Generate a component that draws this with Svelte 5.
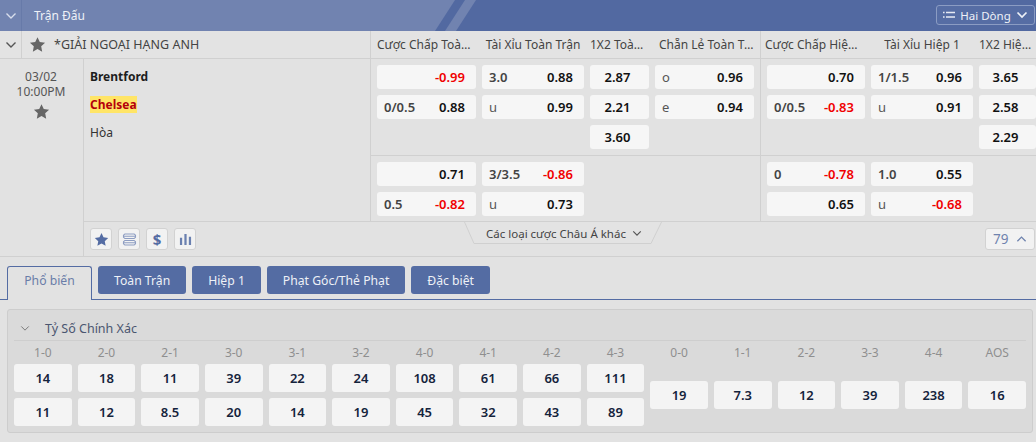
<script>
  const titlesA = ['Cược Chấp Toàn Trận', 'Tài Xỉu Toàn Trận', '1X2 Toàn Trận', 'Chẵn Lẻ Toàn Trận'];
  const titlesB = ['Cược Chấp Hiệp 1', 'Tài Xỉu Hiệp 1', '1X2 Hiệp 1'];
  const a1 = [
    [['', '-0.99'], ['0/0.5', '0.88']],
    [['3.0', '0.88'], ['u', '0.99']],
    [['', '2.87'], ['', '2.21'], ['', '3.60']],
    [['o', '0.96'], ['e', '0.94']]
  ];
  const b1 = [
    [['', '0.70'], ['0/0.5', '-0.83']],
    [['1/1.5', '0.96'], ['u', '0.91']],
    [['', '3.65'], ['', '2.58'], ['', '2.29']]
  ];
  const a2 = [
    [['', '0.71'], ['0.5', '-0.82']],
    [['3/3.5', '-0.86'], ['u', '0.73']],
    [],
    []
  ];
  const b2 = [
    [['0', '-0.78'], ['', '0.65']],
    [['1.0', '0.55'], ['u', '-0.68']],
    []
  ];
  const tabs = ['Toàn Trận', 'Hiệp 1', 'Phạt Góc/Thẻ Phạt', 'Đặc biệt'];
  const scores = [
    ['1-0', '14', '11'], ['2-0', '18', '12'], ['2-1', '11', '8.5'], ['3-0', '39', '20'],
    ['3-1', '22', '14'], ['3-2', '24', '19'], ['4-0', '108', '45'], ['4-1', '61', '32'],
    ['4-2', '66', '43'], ['4-3', '111', '89'], ['0-0', '19'], ['1-1', '7.3'],
    ['2-2', '12'], ['3-3', '39'], ['4-4', '238'], ['AOS', '16']
  ];
  const star = 'M12 1.6l3.2 6.9 7.5.9-5.5 5.2 1.4 7.5L12 18.4l-6.6 3.7 1.4-7.5-5.5-5.2 7.5-.9z';
</script>

{#snippet odds(cols)}
  {#each cols as col}
    <div class="stack">
      {#each col as [line, val]}
        <div class="odd" class:solo={!line}>
          {#if line}<span class="line" class:soft={line === 'u' || line === 'o' || line === 'e'}>{line}</span>{/if}
          <span class="val" class:neg={val.startsWith('-')}>{val}</span>
        </div>
      {/each}
    </div>
  {/each}
{/snippet}

{#snippet chevron(cls, dir = 'down')}
  <svg class={cls} viewBox="0 0 12 8" aria-hidden="true">
    <polyline points={dir === 'down' ? '1.5,1.5 6,6 10.5,1.5' : '1.5,6.5 6,2 10.5,6.5'} />
  </svg>
{/snippet}

<div class="page">
  <header class="topbar">
    <div class="top-chev">{@render chevron('chev light')}</div>
    <div class="top-title">Trận Đấu</div>
    <button class="mode">
      <svg class="lines" viewBox="0 0 12 8" aria-hidden="true">
        <path d="M0 1.500h1.600M3 1.500h9M0 6h1.600M3 6h9" />
      </svg>
      <span>Hai Dòng</span>
      {@render chevron('chev light big')}
    </button>
  </header>

  <div class="league">
    <div class="league-name">
      <div class="league-chev">{@render chevron('chev')}</div>
      <svg class="star hstar" viewBox="0 0 24 24" aria-hidden="true"><path d={star} /></svg>
      <span>*GIẢI NGOẠI HẠNG ANH</span>
    </div>
    <div class="grid-a heads">
      {#each titlesA as t}<div class="head">{t}</div>{/each}
    </div>
    <div class="grid-b heads">
      {#each titlesB as t}<div class="head">{t}</div>{/each}
    </div>
  </div>

  <div class="match">
    <div class="when">
      <div>03/02</div>
      <div>10:00PM</div>
      <svg class="star mstar" viewBox="0 0 24 24" aria-hidden="true"><path d={star} /></svg>
    </div>
    <div class="detail">
      <div class="upper">
        <div class="teams">
          <div class="team"><b>Brentford</b></div>
          <div class="team"><b class="fav">Chelsea</b></div>
          <div class="team">Hòa</div>
        </div>
        <div class="markets">
          <div class="mrow first">
            <div class="grid-a">{@render odds(a1)}</div>
            <div class="grid-b">{@render odds(b1)}</div>
          </div>
          <div class="mrow second">
            <div class="grid-a">{@render odds(a2)}</div>
            <div class="grid-b">{@render odds(b2)}</div>
          </div>
        </div>
      </div>
      <div class="foot">
        <div class="tools">
          <button class="tool" aria-label="Yêu thích">
            <svg viewBox="0 0 24 24" class="t-star"><path d={star} /></svg>
          </button>
          <button class="tool" aria-label="Dòng">
            <svg viewBox="0 0 16 14" class="t-stack">
              <path d="M3 1h10l1.500 1.500v2L13 6H3L1.500 4.500v-2zM3 8h10l1.500 1.500v2L13 13H3l-1.500-1.500v-2zM1.500 3.500h13M1.500 10.500h13" />
            </svg>
          </button>
          <button class="tool dollar">$</button>
          <button class="tool" aria-label="Thống kê">
            <svg viewBox="0 0 14 14" class="t-bars"><path d="M1 5h2.400v8H1zM5.800 1h2.400v12H5.800zM10.600 4h2.400v9h-2.400z" /></svg>
          </button>
        </div>
        <div class="more">
          <svg class="more-bg" viewBox="0 0 198 22" aria-hidden="true">
            <path d="M0.500 0L10 21.500H187L197.500 0" />
          </svg>
          <span>Các loại cược Châu Á khác</span>
          {@render chevron('chev more-chev')}
        </div>
        <button class="count">
          <span>79</span>
          {@render chevron('chev up', 'up')}
        </button>
      </div>
    </div>
  </div>

  <nav class="tabs">
    <div class="tab active">Phổ biến</div>
    {#each tabs as t}<div class="tab">{t}</div>{/each}
  </nav>

  <section class="scorebox">
    <div class="sb-head">
      {@render chevron('chev sb-chev')}
      <span>Tỷ Số Chính Xác</span>
    </div>
    <div class="scores">
      {#each scores as [label, x, y]}
        <div class="score">
          <div class="label">{label}</div>
          <div class="cells" class:mid={!y}>
            <div class="cell">{x}</div>
            {#if y}<div class="cell">{y}</div>{/if}
          </div>
        </div>
      {/each}
    </div>
  </section>
</div>

<style>
  :global(body) {
    margin: 0;
    background: #e2e2e2;
  }
  .page {
    width: 1036px;
    height: 442px;
    overflow: hidden;
    background: #e2e2e2;
    font-family: "Noto Sans", "Open Sans", sans-serif;
    font-size: 12px;
    color: #333;
  }
  button {
    font: inherit;
    padding: 0;
    margin: 0;
    cursor: pointer;
  }
  .chev {
    width: 12px;
    height: 8px;
    fill: none;
    stroke: #555;
    stroke-width: 1.400;
    display: block;
  }
  :global(.chev.light) {
    stroke: #d8deec;
  }
  :global(.chev.big) {
    stroke: #eef1f7;
    stroke-width: 1.700;
  }

  /* top bar */
  .topbar {
    position: relative;
    height: 31px;
    display: flex;
    align-items: center;
    background: #5269a1;
    color: #eef1f7;
    box-sizing: border-box;
  }
  .topbar::before,
  .topbar::after {
    content: "";
    position: absolute;
    inset: 0;
    background: #7183b0;
  }
  .topbar::before {
    clip-path: polygon(0 0, 455px 0, 435px 100%, 0 100%);
  }
  .topbar::after {
    clip-path: polygon(465px 0, 476px 0, 456px 100%, 445px 100%);
  }
  .top-chev {
    position: relative;
    z-index: 1;
    width: 21px;
    height: 31px;
    border-right: 1px solid #677aa9;
    display: flex;
    align-items: center;
    justify-content: center;
    box-sizing: content-box;
  }
  .top-title {
    position: relative;
    z-index: 1;
    margin-left: 12px;
  }
  .mode {
    position: relative;
    z-index: 1;
    margin-left: auto;
    margin-right: 1px;
    width: 99px;
    height: 20px;
    margin-top: -1px;
    display: flex;
    align-items: center;
    justify-content: center;
    gap: 5px;
    background: #566da4;
    border: 1px solid #8b9cc3;
    border-radius: 3px;
    color: #eef1f7;
    font-size: 11.500px;
    box-sizing: border-box;
  }
  .lines {
    width: 12px;
    height: 8px;
    fill: none;
    stroke: #e6eaf3;
    stroke-width: 1.300;
  }

  /* league row */
  .league {
    display: flex;
    height: 28px;
    border-bottom: 1px solid #d0d0d0;
    box-sizing: border-box;
    background: #e3e3e3;
  }
  .league-name {
    width: 370px;
    border-right: 1px solid #d0d0d0;
    display: flex;
    align-items: center;
    color: #444;
    font-size: 12.500px;
    box-sizing: content-box;
  }
  .league-chev {
    width: 21px;
    height: 100%;
    border-right: 1px solid #d0d0d0;
    display: flex;
    align-items: center;
    justify-content: center;
  }
  .star {
    fill: #666;
    display: block;
  }
  .hstar {
    width: 17px;
    height: 17px;
    margin: 0 8px 0 7px;
  }
  .heads {
    align-items: center;
  }
  .head {
    color: #444;
    white-space: nowrap;
    overflow: hidden;
    text-overflow: ellipsis;
    text-align: center;
  }
  .grid-a .head:nth-child(4) {
    padding-left: 4px;
  }
  .grid-b .head:nth-child(1) {
    margin-left: -2px;
    margin-right: 4px;
  }

  /* shared market columns */
  .grid-a {
    width: 390px;
    box-sizing: border-box;
    padding: 0 6px;
    display: grid;
    grid-template-columns: 99px 102px 59px 99px;
    gap: 6px;
    border-right: 1px solid #d0d0d0;
  }
  .grid-b {
    flex: 1;
    box-sizing: border-box;
    padding-left: 6px;
    display: grid;
    grid-template-columns: 98px 102px 57px;
    gap: 6px;
  }

  /* match */
  .match {
    display: flex;
    height: 198px;
    border-bottom: 1px solid #d0d0d0;
    box-sizing: border-box;
  }
  .when {
    width: 82px;
    padding: 10px 1px 0 0;
    border-right: 1px solid #d0d0d0;
    box-sizing: content-box;
    display: flex;
    flex-direction: column;
    align-items: center;
    color: #555;
    line-height: 15px;
  }
  .mstar {
    width: 17px;
    height: 17px;
    margin-top: 4px;
  }
  .detail {
    flex: 1;
    display: flex;
    flex-direction: column;
    min-width: 0;
  }
  .upper {
    display: flex;
    height: 162px;
    border-bottom: 1px solid #d0d0d0;
    box-sizing: content-box;
  }
  .teams {
    flex: none;
    width: 280px;
    border-right: 1px solid #d0d0d0;
    padding: 8px 0 0 6px;
    box-sizing: content-box;
  }
  .team {
    height: 28px;
    line-height: 19px;
    color: #333;
  }
  .team b {
    color: #1d1d1d;
    font-weight: 700;
  }
  .team b.fav {
    color: #b5000b;
    background: #ffe567;
    display: inline-block;
    line-height: 17px;
    margin-top: 1px;
  }
  .markets {
    flex: 1;
    display: flex;
    flex-direction: column;
  }
  .mrow {
    display: flex;
  }
  .mrow.first {
    height: 96px;
    border-bottom: 1px solid #d0d0d0;
    box-sizing: content-box;
  }
  .mrow.first > div,
  .mrow.second > div {
    padding-top: 6px;
  }
  .mrow.second {
    flex: 1;
  }
  .stack {
    display: flex;
    flex-direction: column;
    gap: 6px;
  }
  .odd {
    height: 24px;
    background: #f6f6f6;
    border-radius: 3px;
    display: flex;
    align-items: center;
    justify-content: space-between;
    padding: 0 11px 0 7px;
    box-sizing: border-box;
    font-size: 13px;
    font-weight: 600;
  }
  .odd.solo {
    justify-content: center;
  }
  .grid-a .stack:nth-child(1) .odd.solo,
  .grid-a .stack:nth-child(2) .odd.solo,
  .grid-a .stack:nth-child(4) .odd.solo,
  .grid-b .stack:nth-child(1) .odd.solo,
  .grid-b .stack:nth-child(2) .odd.solo {
    justify-content: flex-end;
  }
  .line {
    color: #444;
    font-weight: 600;
  }
  .line.soft {
    font-weight: 400;
    color: #555;
  }
  .val {
    color: #111;
  }
  .val.neg {
    color: #f00000;
  }

  /* footer */
  .foot {
    position: relative;
    flex: 1;
    display: flex;
    align-items: flex-start;
    justify-content: space-between;
    padding: 6px 0 0 6px;
  }
  .tools {
    display: flex;
    gap: 6px;
  }
  .tool {
    width: 22px;
    height: 22px;
    border: 1px solid #d2d2d2;
    border-radius: 3px;
    background: #f2f2f2;
    display: flex;
    align-items: center;
    justify-content: center;
    box-sizing: border-box;
    color: #546ca3;
  }
  .tool.dollar {
    font-size: 15px;
    font-weight: 700;
    line-height: 1;
  }
  .t-star {
    width: 15px;
    height: 15px;
    fill: #546ca3;
  }
  .t-stack {
    width: 15px;
    height: 13px;
    fill: none;
    stroke: #8d9dc2;
    stroke-width: 1.100;
  }
  .t-bars {
    width: 13px;
    height: 13px;
    fill: #6a80b0;
  }
  .more {
    position: absolute;
    left: 380px;
    top: 0;
    width: 198px;
    height: 22px;
    display: flex;
    align-items: center;
    justify-content: center;
    gap: 6px;
    color: #444;
    padding-left: 2px;
    font-size: 11.500px;
    box-sizing: border-box;
  }
  .more-bg {
    position: absolute;
    inset: 0;
    width: 198px;
    height: 22px;
    fill: #e3e3e3;
    stroke: #d0d0d0;
    stroke-width: 1;
  }
  .more span,
  :global(.more-chev) {
    position: relative;
  }
  :global(.chev.more-chev) {
    width: 10px;
    height: 7px;
    margin-top: 1px;
  }
  .count {
    width: 50px;
    height: 22px;
    margin-right: 1px;
    border: 1px solid #d2d2d2;
    border-radius: 3px;
    background: #f2f2f2;
    color: #6f83ae;
    font-size: 13.500px;
    display: flex;
    align-items: center;
    justify-content: space-between;
    padding: 0 7px 0 7px;
    box-sizing: border-box;
  }
  :global(.chev.up) {
    width: 11px;
    height: 8px;
    stroke: #6f83ae;
  }

  /* tabs */
  .tabs {
    display: flex;
    gap: 6px;
    height: 43px;
    padding: 9px 0 0 7px;
    box-sizing: border-box;
    border-bottom: 1px solid #546ca3;
  }
  .tab {
    height: 28px;
    padding: 0 16px;
    background: #546ca3;
    color: #eef1f7;
    border-radius: 3px;
    display: flex;
    align-items: center;
    font-size: 12.200px;
    box-sizing: border-box;
  }
  .tab.active {
    height: 34px;
    width: 85px;
    padding: 0 0 6px;
    justify-content: center;
    background: #e2e2e2;
    color: #6a7da8;
    border: 1px solid #546ca3;
    border-bottom: none;
    border-radius: 3px 3px 0 0;
  }

  /* scores */
  .scorebox {
    margin: 9px 3px 0 7px;
    height: 124px;
    padding: 0 6px;
    background: #dadada;
    border: 1px solid #cdcdcd;
    border-radius: 3px;
    box-sizing: border-box;
  }
  .sb-head {
    height: 31px;
    display: flex;
    align-items: center;
    gap: 15px;
    color: #4a5670;
    font-size: 12.500px;
    border-bottom: 1px solid #cecece;
    box-sizing: border-box;
    padding: 6px 0 0 6px;
  }
  :global(.chev.sb-chev) {
    width: 10px;
    height: 7px;
    stroke: #666;
    stroke-width: 1;
  }
  .scores {
    display: grid;
    grid-template-columns: repeat(16, 1fr);
    gap: 6px;
  }
  .label {
    height: 23px;
    line-height: 23px;
    text-align: center;
    color: #8f8f8f;
  }
  .cells {
    display: flex;
    flex-direction: column;
    gap: 6px;
    height: 62px;
  }
  .cells.mid {
    justify-content: center;
  }
  .cell {
    height: 28px;
    background: #f4f4f4;
    border-radius: 3px;
    display: flex;
    align-items: center;
    justify-content: center;
    color: #14233c;
    font-size: 13px;
    font-weight: 600;
  }
</style>
